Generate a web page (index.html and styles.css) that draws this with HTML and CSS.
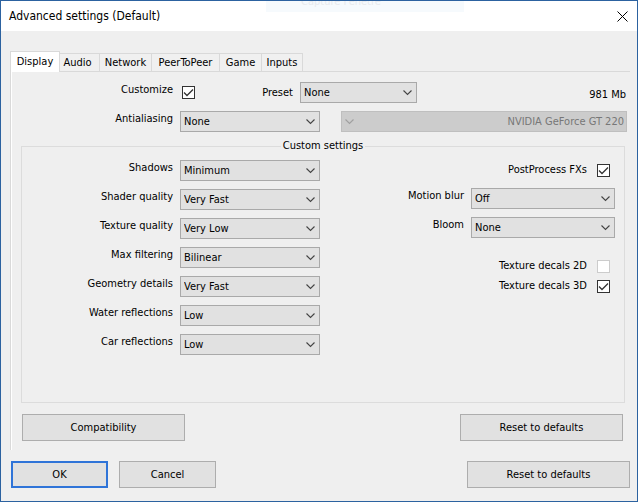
FILE: index.html
```html
<!DOCTYPE html>
<html lang="en">
<head>
    <meta charset="UTF-8">
    <meta name="viewport" content="width=device-width, initial-scale=1.0">
    <title>Advanced settings (Default)</title>
    <link rel="stylesheet" href="styles.css">
</head>
<body>
<div class="window">
    <!-- title bar -->
    <header class="titlebar">
        <h1 class="title">Advanced settings (Default)</h1>
        <div class="ghost">Capture Fenêtre</div>
        <button type="button" class="close" aria-label="Close">
            <svg width="11" height="11" viewBox="0 0 11 11"><path d="M.5 .5 10.5 10.5M10.5 .5 .5 10.5" stroke="#000" fill="none"/></svg>
        </button>
    </header>
    <form class="content">
        <div class="tabs" role="tablist">
            <button type="button" class="tab tab-active" role="tab" aria-selected="true">Display</button>
            <button type="button" class="tab tab-audio" role="tab">Audio</button>
            <button type="button" class="tab tab-network" role="tab">Network</button>
            <button type="button" class="tab tab-peer" role="tab">PeerToPeer</button>
            <button type="button" class="tab tab-game" role="tab">Game</button>
            <button type="button" class="tab tab-inputs" role="tab">Inputs</button>
        </div>
        <!-- display tab -->
        <div class="panel" role="tabpanel">
            <div class="row row-top">
                <label class="label" for="customize">Customize</label>
                <input class="check" type="checkbox" id="customize" checked>
                <label class="label label-mid" for="preset">Preset</label>
                <select class="select select-preset" id="preset"><option>None</option></select>
                <span class="memory">981 Mb</span>
            </div>
            <div class="row">
                <label class="label" for="antialiasing">Antialiasing</label>
                <select class="select" id="antialiasing"><option>None</option></select>
                <select class="select select-card" aria-label="Graphics card" disabled><option>NVIDIA GeForce GT 220</option></select>
            </div>
            <fieldset class="group">
                <legend class="legend">Custom settings</legend>
                <div class="columns">
                    <div class="column">
                        <div class="row">
                            <label class="label" for="shadows">Shadows</label>
                            <select class="select" id="shadows"><option>Minimum</option></select>
                        </div>
                        <div class="row">
                            <label class="label" for="shader">Shader quality</label>
                            <select class="select" id="shader"><option>Very Fast</option></select>
                        </div>
                        <div class="row">
                            <label class="label" for="texture">Texture quality</label>
                            <select class="select" id="texture"><option>Very Low</option></select>
                        </div>
                        <div class="row">
                            <label class="label" for="filtering">Max filtering</label>
                            <select class="select" id="filtering"><option>Bilinear</option></select>
                        </div>
                        <div class="row">
                            <label class="label" for="geometry">Geometry details</label>
                            <select class="select" id="geometry"><option>Very Fast</option></select>
                        </div>
                        <div class="row">
                            <label class="label" for="water">Water reflections</label>
                            <select class="select" id="water"><option>Low</option></select>
                        </div>
                        <div class="row">
                            <label class="label" for="car">Car reflections</label>
                            <select class="select" id="car"><option>Low</option></select>
                        </div>
                    </div>
                    <div class="column">
                        <div class="check-row">
                            <label for="postprocess">PostProcess FXs</label>
                            <input class="check" type="checkbox" id="postprocess" checked>
                        </div>
                        <div class="row row-right">
                            <label class="label" for="blur">Motion blur</label>
                            <select class="select select-effect" id="blur"><option>Off</option></select>
                        </div>
                        <div class="row row-right">
                            <label class="label" for="bloom">Bloom</label>
                            <select class="select select-effect" id="bloom"><option>None</option></select>
                        </div>
                        <div class="decals">
                            <div class="check-row">
                                <label for="decals2d">Texture decals 2D</label>
                                <input class="check" type="checkbox" id="decals2d" disabled>
                            </div>
                            <div class="check-row">
                                <label for="decals3d">Texture decals 3D</label>
                                <input class="check" type="checkbox" id="decals3d" checked>
                            </div>
                        </div>
                    </div>
                </div>
            </fieldset>
            <div class="panel-buttons">
                <button type="button" class="button button-wide">Compatibility</button>
                <button type="button" class="button button-wide">Reset to defaults</button>
            </div>
        </div>
        <!-- dialog buttons -->
        <footer class="footer">
            <button type="submit" class="button button-default">OK</button>
            <button type="button" class="button">Cancel</button>
            <button type="reset" class="button button-wide button-last">Reset to defaults</button>
        </footer>
    </form>
</div>
</body>
</html>
```
FILE: styles.css
```css
* {
    box-sizing: border-box;
}
body {
    margin: 0;
    font-family: Tahoma, "DejaVu Sans Condensed", "Noto Sans", sans-serif;
    font-size: 11px;
    line-height: 16px;
    color: #000;
    background-color: #efefef;
}
button, select {
    font: inherit;
    color: inherit;
}
.window {
    display: flex;
    flex-direction: column;
    min-height: 100vh;
    border: 1px solid #2c62a0;
}
/* title bar */
.titlebar {
    position: relative;
    display: flex;
    align-items: center;
    justify-content: space-between;
    height: 30px;
    padding: 0 9px 0 8px;
    background-color: #fff;
}
.title {
    margin: 0;
    font-size: 12px;
    font-weight: normal;
}
.ghost {
    position: absolute;
    top: 0;
    left: 265px;
    width: 198px;
    height: 11px;
    padding-right: 48px;
    line-height: 2px;
    text-align: center;
    color: #e8eaee;
    background-color: #f6fafd;
    overflow: hidden;
}
.close {
    display: flex;
    padding: 0;
    border: 0;
    background: none;
}
.content {
    flex: 1;
    display: flex;
    flex-direction: column;
    padding: 20px 7px 13px 9px;
}
/* tabs */
.tabs {
    display: flex;
    align-items: flex-end;
    height: 21px;
    margin-bottom: -1px;
    padding-right: 1px;
}
.tab {
    height: 19px;
    padding: 0;
    border: 1px solid #d9d9d9;
    border-left: 0;
    background-color: #f0f0f0;
    white-space: nowrap;
}
.tab-active {
    position: relative;
    width: 50px;
    height: 21px;
    border-left: 1px solid #d9d9d9;
    border-bottom: 0;
    background-color: #fff;
}
.tab-audio {
    width: 40px;
    padding-right: 4px;
}
.tab-network {
    width: 52px;
}
.tab-peer {
    width: 68px;
}
.tab-game {
    width: 42px;
}
.tab-inputs {
    width: 41px;
}
.panel {
    flex: 1;
    padding: 10px 3px 8px 9px;
    border-top: 1px solid #d9d9d9;
    border-left: 1px solid #d9d9d9;
    box-shadow: inset 1px 0 #fff;
}
/* rows */
.row {
    display: flex;
    align-items: flex-start;
}
.label {
    width: 153px;
    text-align: right;
    white-space: nowrap;
}
.row > .select,
.row > .check {
    margin-left: 7px;
}
.row-top {
    margin-bottom: 8px;
}
.row-top .check {
    margin-top: 4px;
    margin-left: 9px;
}
.label-mid {
    width: 98px;
    margin-top: 3px;
}
.memory {
    margin-top: 5px;
    margin-left: auto;
    padding-right: 1px;
}
.select {
    appearance: none;
    width: 140px;
    height: 21px;
    padding: 0 20px 0 3px;
    border: 1px solid #a9a9a9;
    border-radius: 0;
    background: #e1e1e1 url("data:image/svg+xml,%3Csvg xmlns='http://www.w3.org/2000/svg' width='9' height='6'%3E%3Cpath d='M.5 .5 4.5 4.5 8.5 .5' fill='none' stroke='%23444' stroke-width='1.1'/%3E%3C/svg%3E") no-repeat right 4px top 7px;
}
.select-preset {
    width: 117px;
}
.row > .select-card {
    flex: 1;
    margin-left: 21px;
    padding: 0 2px 0 20px;
    border-color: #bfbfbf;
    direction: rtl;
    color: #777;
    background-color: #ccc;
    background-image: url("data:image/svg+xml,%3Csvg xmlns='http://www.w3.org/2000/svg' width='9' height='6'%3E%3Cpath d='M.5 .5 4.5 4.5 8.5 .5' fill='none' stroke='%23a0a0a0' stroke-width='1.1'/%3E%3C/svg%3E");
    background-position: left 3px top 7px;
    opacity: 1;
}
.check {
    appearance: none;
    width: 13px;
    height: 13px;
    margin: 0;
    border: 1px solid #333;
    background-color: #fff;
}
.check:checked {
    background-image: url("data:image/svg+xml,%3Csvg xmlns='http://www.w3.org/2000/svg' width='11' height='11'%3E%3Cpath d='M1 5.5 4 8.5 10 2.5' fill='none' stroke='%23333' stroke-width='1.3'/%3E%3C/svg%3E");
}
.check:disabled {
    border-color: #ccc;
}
/* custom settings */
.group {
    min-width: 0;
    margin: 6px 2px 0 1px;
    padding: 0 0 47px;
    border: 1px solid #dcdcdc;
}
.legend {
    margin: 0 auto;
    padding: 0 2px;
}
.group .label {
    width: 151px;
}
.columns {
    display: flex;
    justify-content: space-between;
    padding: 6px 9px 0 0;
}
.column {
    display: flex;
    flex-direction: column;
    gap: 8px;
}
.group .row-right .label {
    width: auto;
}
.row-right {
    justify-content: flex-end;
}
.row > .select-effect {
    width: 144px;
}
.check-row {
    display: flex;
    align-items: center;
    justify-content: flex-end;
    gap: 10px;
    height: 20px;
    padding-right: 5px;
}
.decals {
    padding-top: 10px;
}
/* buttons */
.panel-buttons {
    display: flex;
    justify-content: space-between;
    padding: 11px 4px 0 2px;
}
.footer {
    display: flex;
    gap: 11px;
    padding-top: 11px;
    padding-left: 1px;
}
.button {
    width: 97px;
    height: 27px;
    padding: 0;
    border: 1px solid #adadad;
    background-color: #e1e1e1;
}
.button-wide {
    width: 163px;
}
.button-default {
    border: 2px solid #2f74d8;
}
.button-last {
    margin-left: auto;
}
```
